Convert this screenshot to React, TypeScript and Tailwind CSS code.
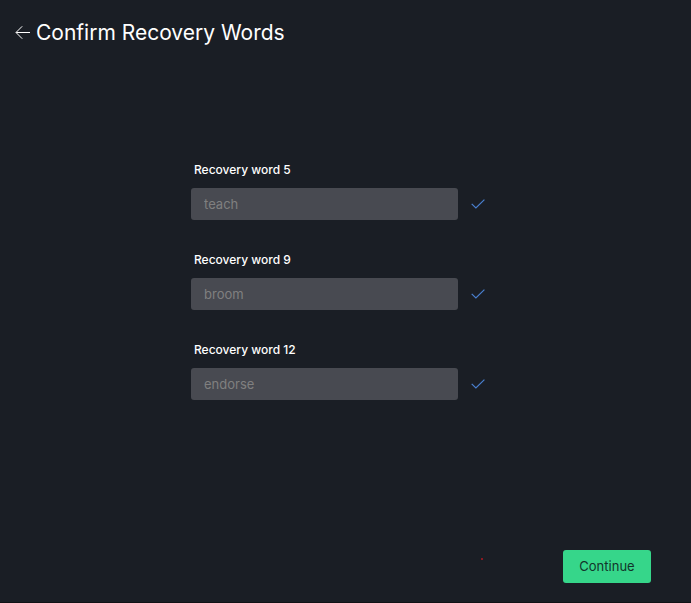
const fields = [
  { position: 5, word: 'teach' },
  { position: 9, word: 'broom' },
  { position: 12, word: 'endorse' },
];

function BackArrow() {
  return (
    <svg width="16" height="14" viewBox="0 0 16 14" fill="none" stroke="currentColor" strokeWidth="1" aria-hidden="true">
      <path d="M15 6.5H1.2M7.2 0.3L1 6.5l6.2 6.2" />
    </svg>
  );
}

function CheckMark() {
  return (
    <svg width="14" height="10" viewBox="0 0 14 10" fill="none" stroke="#4a80d0" strokeWidth="1.2" aria-hidden="true">
      <path d="M0.7 4.8L4.9 9L13.4 0.6" />
    </svg>
  );
}

function WordField({ position, word }: { position: number; word: string }) {
  const id = `recovery-word-${position}`;
  return (
    <div>
      <label htmlFor={id} className="block pl-[3px] text-xs leading-5 font-medium text-white">
        Recovery word {position}
      </label>
      <div className="mt-2 flex items-center gap-[13px]">
        <input
          id={id}
          type="text"
          defaultValue={word}
          readOnly
          className="h-8 w-[267px] rounded-[3px] bg-[#484a51] px-[13px] text-[13px] text-[#808080] outline-none"
        />
        <CheckMark />
      </div>
    </div>
  );
}

export default function App() {
  return (
    <main className="flex min-h-screen flex-col border-b border-[#101215] bg-[#1a1e25] font-['Inter',sans-serif]">
      <header className="flex items-center gap-[5px] px-[15px] pt-4">
        <button type="button" aria-label="Back" className="text-white">
          <BackArrow />
        </button>
        <h1 className="text-[21px] leading-[34px] font-normal text-white">Confirm Recovery Words</h1>
      </header>
      <form id="words" className="mx-auto mt-[110px] flex w-[309px] flex-1 flex-col gap-[30px]">
        {fields.map((field) => (
          <WordField key={field.position} position={field.position} word={field.word} />
        ))}
      </form>
      <footer className="flex items-start justify-end gap-20 pr-10 pb-[19px]">
        <span className="mt-2 size-[2px] rounded-full bg-[#b01820]" />
        <button type="submit" form="words" className="h-[33px] w-[88px] rounded-[3px] bg-[#36d68a] text-[13px] text-[#12352a]">
          Continue
        </button>
      </footer>
    </main>
  );
}
